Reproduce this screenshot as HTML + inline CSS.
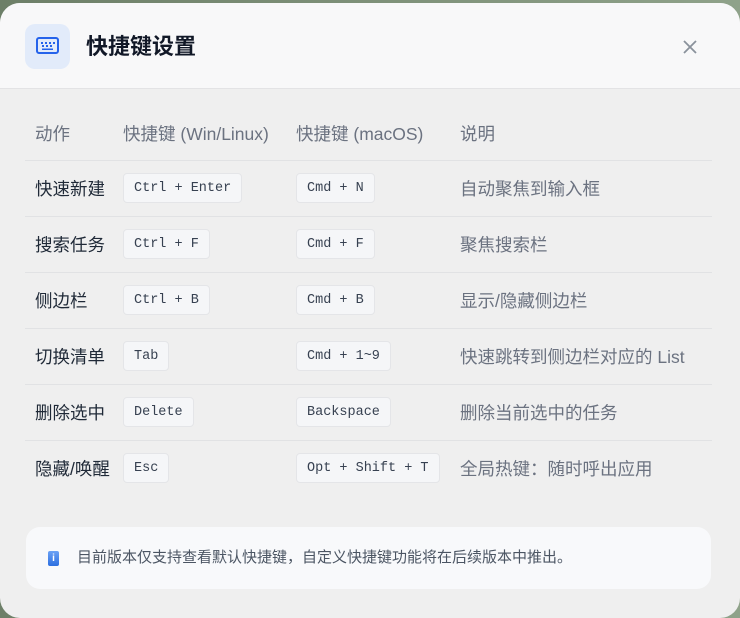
<!DOCTYPE html>
<html style="width:740px;height:618px;overflow:hidden"><head><meta charset="utf-8"><style>
*{box-sizing:border-box;margin:0;padding:0}
body{width:740px;height:618px;background:linear-gradient(90deg,#6d7f68,#8fa28a);position:relative;overflow:hidden;font-family:"Liberation Sans","Noto Sans CJK SC",sans-serif}
.modal{position:absolute;left:0;top:3px;width:740px;height:615px;background:#efefef;border-radius:20px;overflow:hidden}
.hdr{height:86px;background:#f8f8f9;border-bottom:1px solid #e3e3e5;position:relative}
.ico{position:absolute;left:25px;top:21px;width:45px;height:45px;border-radius:10px;background:#e2ebfa}
.ico svg{position:absolute;left:11px;top:12px}
.title{position:absolute;left:86px;top:29px;font-size:22px;font-weight:bold;color:#111827;line-height:30px}
.close{position:absolute;left:682px;top:36px}
table{position:absolute;left:25px;top:104px;width:687px;border-collapse:collapse}
td,th{height:56px;text-align:left;font-weight:normal;font-size:17.5px;vertical-align:middle;padding:0}
th{color:#6b7280;height:53px}
tr{border-bottom:1px solid #e1e2e4}
tr:last-child{border-bottom:none}
td:first-child,th:first-child{padding-left:10px;width:98px}
td:first-child{color:#1f2937}
td:nth-child(2),th:nth-child(2){width:173px}
td:nth-child(3),th:nth-child(3){width:164px}
td:nth-child(4){color:#6b7280}
kbd{display:inline-flex;align-items:center;font-family:"Liberation Mono","DejaVu Sans Mono",monospace;font-size:13.5px;color:#374151;background:#f5f6f8;border:1px solid #e4e5e8;border-radius:4px;height:30px;padding:1px 10px 0;vertical-align:middle}
.note{position:absolute;left:26px;top:524px;width:685px;height:62px;background:#f8f9fb;border-radius:14px}
.note .i{position:absolute;left:22px;top:24px;width:11px;height:15px;background:linear-gradient(#6aa1f5,#2d6fe0);border-radius:2px;color:#fff;font-size:10px;text-align:center;line-height:15px;font-weight:bold}
.note p{position:absolute;left:51px;top:20px;font-size:15px;color:#4b5563;line-height:22px}
</style></head><body>
<div class="modal">
<div class="hdr">
<div class="ico"><svg width="23" height="20" viewBox="0 0 23 20"><rect x="1" y="2" width="21" height="15" rx="2" fill="none" stroke="#2563eb" stroke-width="2"/><g fill="#2563eb"><rect x="5" y="6" width="2" height="2"/><rect x="9" y="6" width="2" height="2"/><rect x="13" y="6" width="2" height="2"/><rect x="17" y="6" width="2" height="2"/><rect x="6" y="9" width="2" height="2"/><rect x="10" y="9" width="2" height="2"/><rect x="14" y="9" width="2" height="2"/><rect x="6" y="12.5" width="11" height="1.5"/></g></svg></div>
<div class="title">快捷键设置</div>
<svg class="close" width="16" height="16" viewBox="0 0 16 16"><path d="M2 2L14 14M14 2L2 14" stroke="#8a919c" stroke-width="1.8"/></svg>
</div>
<table>
<tr><th>动作</th><th>快捷键 (Win/Linux)</th><th>快捷键 (macOS)</th><th>说明</th></tr>
<tr><td>快速新建</td><td><kbd>Ctrl + Enter</kbd></td><td><kbd>Cmd + N</kbd></td><td>自动聚焦到输入框</td></tr>
<tr><td>搜索任务</td><td><kbd>Ctrl + F</kbd></td><td><kbd>Cmd + F</kbd></td><td>聚焦搜索栏</td></tr>
<tr><td>侧边栏</td><td><kbd>Ctrl + B</kbd></td><td><kbd>Cmd + B</kbd></td><td>显示/隐藏侧边栏</td></tr>
<tr><td>切换清单</td><td><kbd>Tab</kbd></td><td><kbd>Cmd + 1~9</kbd></td><td>快速跳转到侧边栏对应的 List</td></tr>
<tr><td>删除选中</td><td><kbd>Delete</kbd></td><td><kbd>Backspace</kbd></td><td>删除当前选中的任务</td></tr>
<tr><td>隐藏/唤醒</td><td><kbd>Esc</kbd></td><td><kbd>Opt + Shift + T</kbd></td><td>全局热键：随时呼出应用</td></tr>
</table>
<div class="note"><div class="i">i</div><p>目前版本仅支持查看默认快捷键，自定义快捷键功能将在后续版本中推出。</p></div>
</div>
</body></html>
